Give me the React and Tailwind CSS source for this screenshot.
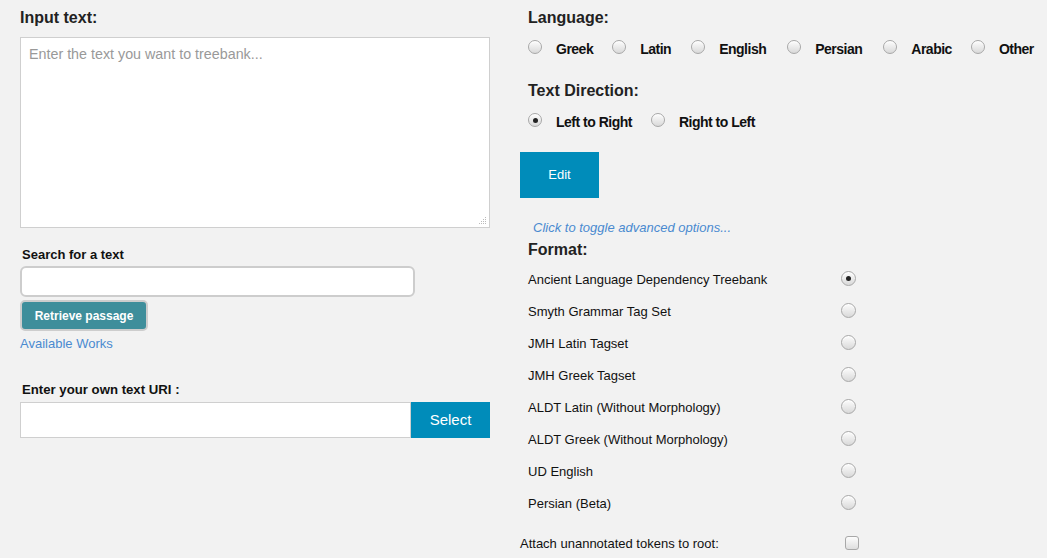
import React from "react";

function Radio({ checked = false, size = 14 }) {
  return (
    <span
      className="inline-flex shrink-0 items-center justify-center rounded-full border border-[#a8a8a8] bg-linear-to-b from-[#fdfdfd] to-[#d9d9d9] shadow-[inset_0_1px_0_#fff]"
      style={{ width: size, height: size }}
    >
      {checked && <span className="block h-[5px] w-[5px] rounded-full bg-[#222]" />}
    </span>
  );
}

function LangRadio({ label, checked, gapAfter }) {
  return (
    <div className="flex items-center" style={{ marginRight: gapAfter }}>
      <span className="-mt-[4px] flex">
        <Radio checked={checked} />
      </span>
      <span className="ml-[14px] text-[14px] font-bold leading-[20px] tracking-[-0.5px] text-[#111]">
        {label}
      </span>
    </div>
  );
}

const formats = [
  ["Ancient Language Dependency Treebank", true],
  ["Smyth Grammar Tag Set", false],
  ["JMH Latin Tagset", false],
  ["JMH Greek Tagset", false],
  ["ALDT Latin (Without Morphology)", false],
  ["ALDT Greek (Without Morphology)", false],
  ["UD English", false],
  ["Persian (Beta)", false],
];

export default function App() {
  return (
    <div
      className="flex h-[558px] w-[1047px] overflow-hidden bg-[#f2f2f2] text-[#222]"
      style={{ fontFamily: '"Liberation Sans", Arial, sans-serif' }}
    >
      {/* Left column */}
      <div className="flex w-[490px] shrink-0 flex-col pl-5">
        <div className="pt-[8px] text-[16px] font-bold leading-[20px] text-[#222]">Input text:</div>
        <div className="relative mt-[9px] h-[191px] w-[470px] border border-[#cfcfcf] bg-white">
          <div className="px-[8px] pt-[7px] text-[14.3px] leading-[18px] text-[#999]">
            Enter the text you want to treebank...
          </div>
          <svg className="absolute bottom-[2px] right-[2px]" width="8" height="8" viewBox="0 0 8 8">
            <g fill="#bbb">
              <rect x="6" y="0" width="1" height="1" />
              <rect x="6" y="2" width="1" height="1" />
              <rect x="6" y="4" width="1" height="1" />
              <rect x="6" y="6" width="1" height="1" />
              <rect x="4" y="2" width="1" height="1" />
              <rect x="4" y="4" width="1" height="1" />
              <rect x="4" y="6" width="1" height="1" />
              <rect x="2" y="4" width="1" height="1" />
              <rect x="2" y="6" width="1" height="1" />
              <rect x="0" y="6" width="1" height="1" />
            </g>
          </svg>
        </div>

        <div className="mt-[19px] pl-[2px] text-[13px] font-bold leading-[16px] text-[#111]">Search for a text</div>
        <div className="mt-[3px] h-[31px] w-[395px] rounded-[6px] border-2 border-[#cdcdcd] bg-white" />
        <div className="mt-[3px] flex h-[31px] w-[128px] items-center justify-center rounded-[5px] border-2 border-[#cdcdcd] bg-[#3e8e9b] text-[12px] font-bold text-white">
          Retrieve passage
        </div>
        <div className="mt-[5px] text-[13px] leading-[16px] text-[#4a8ad0]">Available Works</div>

        <div className="mt-[30px] pl-[2px] text-[13.2px] font-bold leading-[16px] text-[#111]">
          Enter your own text URI :
        </div>
        <div className="mt-[4px] flex h-[36px] w-[470px]">
          <div className="h-full flex-1 border border-[#cfcfcf] bg-white" />
          <div className="flex h-full w-[79px] items-center justify-center bg-[#008cba] text-[15px] text-white">
            Select
          </div>
        </div>
      </div>

      {/* Right column */}
      <div className="ml-[30px] flex flex-1 flex-col">
        <div className="pl-2 pt-[8px] text-[16px] font-bold leading-[20px] text-[#222]">Language:</div>
        <div className="mt-[11px] flex h-[20px] items-center pl-2">
          <LangRadio label="Greek" gapAfter={19} />
          <LangRadio label="Latin" gapAfter={20} />
          <LangRadio label="English" gapAfter={21} />
          <LangRadio label="Persian" gapAfter={21} />
          <LangRadio label="Arabic" gapAfter={19} />
          <LangRadio label="Other" gapAfter={0} />
        </div>

        <div className="mt-[22px] pl-2 text-[16px] font-bold leading-[20px] text-[#222]">Text Direction:</div>
        <div className="mt-[11px] flex h-[20px] items-center pl-2">
          <LangRadio label="Left to Right" checked gapAfter={19} />
          <LangRadio label="Right to Left" gapAfter={0} />
        </div>

        <div className="mt-[20px] flex h-[46px] w-[79px] items-center justify-center bg-[#008cba] text-[13px] text-white">
          Edit
        </div>

        <div className="mt-[22px] pl-[13px] text-[13px] italic leading-[16px] text-[#4a8ad0]">
          Click to toggle advanced options...
        </div>

        <div className="mt-[4px] pl-2 text-[16px] font-bold leading-[20px] text-[#222]">Format:</div>

        <div className="mt-[4px] flex flex-col">
          {formats.map(([label, checked]) => (
            <div key={label} className="flex h-[32px] items-center pl-2">
              <span className="w-[313px] text-[13px] leading-[16px] text-[#111]">{label}</span>
              <span className="-mt-[3px] flex">
                <Radio checked={checked} size={15} />
              </span>
            </div>
          ))}
        </div>

        <div className="mt-[16px] flex h-[16px] items-center">
          <span className="w-[325px] text-[13px] leading-[16px] text-[#111]">Attach unannotated tokens to root:</span>
          <span className="-mt-[3px] block h-[14px] w-[14px] rounded-[3px] border border-[#a8a8a8] bg-linear-to-b from-[#fdfdfd] to-[#dedede]" />
        </div>
      </div>
    </div>
  );
}
